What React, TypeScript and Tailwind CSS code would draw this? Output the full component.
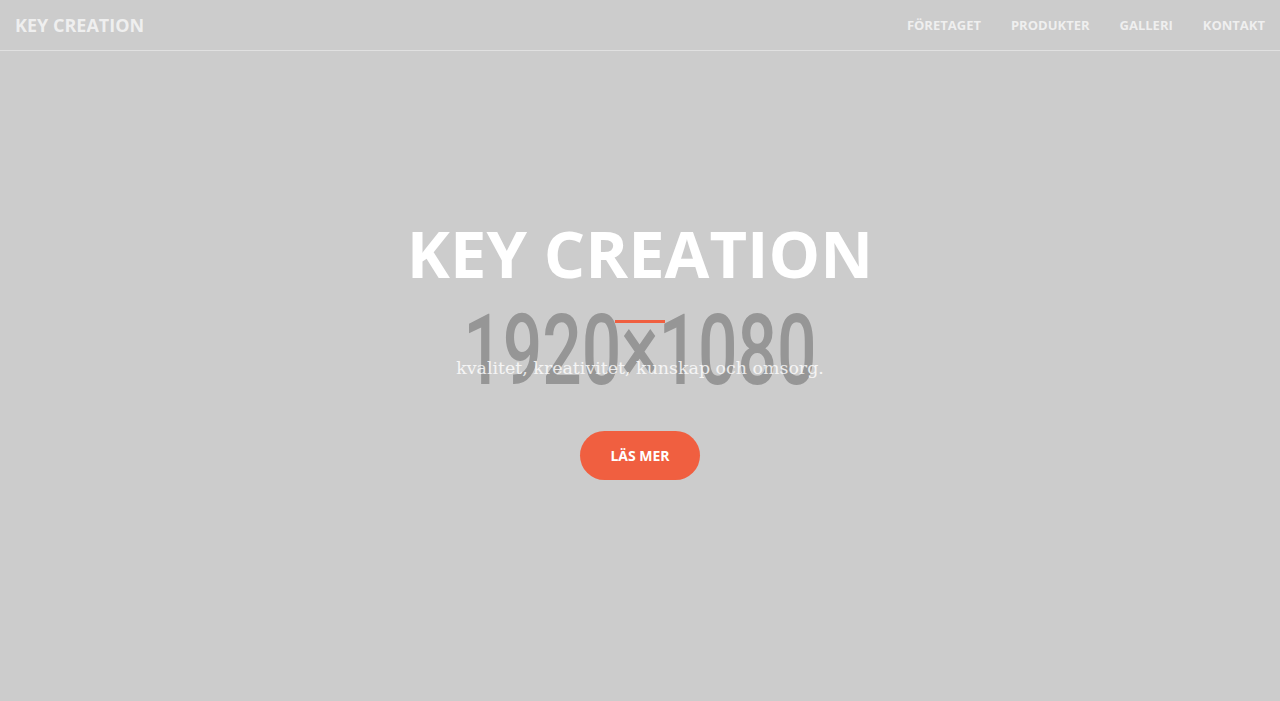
import React from "react";

export default function App() {
  const links = ["Företaget", "Produkter", "Galleri", "Kontakt"];
  return (
    <div className="relative h-[701px] w-full overflow-hidden bg-[#cccccc] font-['Open_Sans',sans-serif]">
      {/* background placeholder image */}
      <div className="absolute inset-0 flex items-center justify-center pointer-events-none">
        <div className="scale-x-[0.71] whitespace-nowrap font-['Roboto',sans-serif] text-[98px] font-medium leading-none text-[#969696]">
          1920×1080
        </div>
      </div>

      {/* navbar */}
      <nav className="absolute left-0 right-0 top-0 z-10 flex h-[51px] items-center justify-between border-b border-white/40">
        <a className="pl-[15px] text-[18px] font-bold uppercase text-white/70">Key Creation</a>
        <ul className="flex pt-[2px]">
          {links.map((l) => (
            <li key={l} className="px-[15px] text-[13px] font-bold uppercase text-white/70">
              {l}
            </li>
          ))}
        </ul>
      </nav>

      {/* hero content */}
      <div className="relative z-10 flex h-full flex-col items-center justify-center">
        <h1 className="text-[65px] font-bold uppercase leading-none text-white">Key Creation</h1>
        <div className="mt-[34px] h-[3px] w-[50px] bg-[#f05f40]" />
        <p className="mt-[32px] font-['DejaVu_Serif',serif] text-[17.4px] text-white/80">
          kvalitet, kreativitet, kunskap och omsorg.
        </p>
        <button className="mt-[50px] flex h-[49px] w-[120px] items-center justify-center rounded-full bg-[#f05f40] text-[14px] font-bold uppercase text-white">
          Läs mer
        </button>
      </div>
    </div>
  );
}
